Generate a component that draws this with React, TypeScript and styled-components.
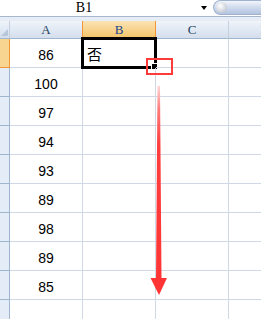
import styled, { createGlobalStyle } from "styled-components";

const GlobalStyle = createGlobalStyle`
  html, body {
    margin: 0;
    padding: 0;
    background: #fff;
    overflow: hidden;
  }
`;

const Page = styled.div`
  position: relative;
  width: 261px;
  height: 319px;
  overflow: hidden;
  background: #fff;
`;

const FormulaBar = styled.div`
  display: flex;
  align-items: center;
  height: 16px;
  border-bottom: 1px solid #a7b7cc;
  background: #fff;
`;

const NameBox = styled.div`
  width: 196px;
  display: flex;
  align-items: center;
  justify-content: center;
  padding-right: 28px;
  box-sizing: border-box;
  font-family: "Liberation Serif", serif;
  font-size: 14px;
  color: #000;
  height: 16px;
  line-height: 16px;
`;

const DropArrow = styled.div`
  width: 0;
  height: 0;
  margin-left: 5px;
  border-left: 3.5px solid transparent;
  border-right: 3.5px solid transparent;
  border-top: 4px solid #000;
`;

const ExpandButton = styled.div`
  position: relative;
  margin-left: 6px;
  flex: 1;
  height: 15px;
  align-self: flex-start;
  border-radius: 8px 0 0 8px;
  background: linear-gradient(#f1f5fb, #ccd8ec 55%, #b3c4df);
  border: 1px solid #9fb2cf;
  border-right: none;
  box-sizing: border-box;
`;

const Knob = styled.div`
  position: absolute;
  left: 2px;
  top: 1px;
  width: 11px;
  height: 11px;
  border-radius: 50%;
  background: radial-gradient(circle at 40% 35%, #ffffff, #c8cdd6 70%, #9aa3b3);
`;

const Band = styled.div`
  height: 4px;
  background: #e6edf7;
`;

const Grid = styled.div`
  display: grid;
  grid-template-columns: 10px 73px 73px 73px 73px;
  grid-template-rows: 18px;
  grid-auto-rows: 29px;
  & > div {
    box-sizing: border-box;
    border-right: 1px solid #d0d7e5;
    border-bottom: 1px solid #d0d7e5;
  }
`;

const HeaderCell = styled.div<{ $selected?: boolean }>`
  position: relative;
  display: flex;
  align-items: center;
  justify-content: center;
  font-family: "Liberation Serif", serif;
  font-size: 13px;
  color: ${(p) => (p.$selected ? "#15428b" : "#27415f")};
  background: ${(p) =>
    p.$selected
      ? "linear-gradient(#fbe3b4, #f8d593 45%, #f3c468)"
      : "linear-gradient(#f0f4fa, #e1e9f4 50%, #d5deec)"};
  &&& {
    border-right: 1px solid ${(p) => (p.$selected ? "#f29536" : "#c5d0df")};
    border-bottom: 1px solid #9eb6ce;
  }
  ${(p) => (p.$selected ? "box-shadow: -1px 0 0 #f29536;" : "")}
  white-space: nowrap;
`;

const CornerMark = styled.div`
  position: absolute;
  right: 1px;
  bottom: 2px;
  width: 0;
  height: 0;
  border-left: 7px solid transparent;
  border-bottom: 7px solid #b7c6da;
`;

const RowHead = styled.div<{ $selected?: boolean }>`
  background: ${(p) => (p.$selected ? "#f8d591" : "#e4ecf7")};
  &&& {
    border-right: 1px solid ${(p) => (p.$selected ? "#f29536" : "#9eb6ce")};
    border-bottom: 1px solid ${(p) => (p.$selected ? "#f29536" : "#9eb6ce")};
  }
`;

const NumCell = styled.div`
  display: flex;
  align-items: center;
  justify-content: center;
  padding-top: 3px;
  font-family: "Liberation Sans", Arial, sans-serif;
  font-size: 14px;
  color: #000;
`;

const TextCell = styled.div`
  position: relative;
  display: flex;
  align-items: center;
  padding-left: 4px;
  font-family: "Noto Sans CJK SC", sans-serif;
  font-size: 15px;
  color: #000;
`;

const Selection = styled.div`
  position: absolute;
  left: -2px;
  top: -2px;
  right: -2px;
  bottom: -2px;
  border: 3px solid #000;
  pointer-events: none;
`;

const FillHandle = styled.div`
  position: absolute;
  right: -4px;
  bottom: -4px;
  width: 5px;
  height: 5px;
  background: #000;
  border: 1px solid #fff;
`;

const Callout = styled.div`
  position: absolute;
  left: 146px;
  top: 58px;
  width: 27px;
  height: 17px;
  border: 2px solid #ff3a3a;
  box-sizing: border-box;
  pointer-events: none;
`;

const ArrowLayer = styled.svg`
  position: absolute;
  left: 0;
  top: 0;
  pointer-events: none;
`;

const values = ["86", "100", "97", "94", "93", "89", "98", "89", "85", ""];

export default function App() {
  return (
    <Page>
      <GlobalStyle />
      <FormulaBar>
        <NameBox>B1</NameBox>
        <DropArrow />
        <ExpandButton>
          <Knob />
        </ExpandButton>
      </FormulaBar>
      <Band />
      <Grid>
        <HeaderCell>
          <CornerMark />
        </HeaderCell>
        <HeaderCell>A</HeaderCell>
        <HeaderCell $selected>B</HeaderCell>
        <HeaderCell>C</HeaderCell>
        <HeaderCell>D</HeaderCell>
        {values.flatMap((v, i) => [
          <RowHead key={`h${i}`} $selected={i === 0} />,
          <NumCell key={`a${i}`}>{v}</NumCell>,
          i === 0 ? (
            <TextCell key={`b${i}`}>
              否
              <Selection>
                <FillHandle />
              </Selection>
            </TextCell>
          ) : (
            <TextCell key={`b${i}`} />
          ),
          <TextCell key={`c${i}`} />,
          <TextCell key={`d${i}`} />,
        ])}
      </Grid>
      <Callout />
      <ArrowLayer width="261" height="319" viewBox="0 0 261 319">
        <defs>
          <linearGradient id="shaft" x1="0" y1="86" x2="0" y2="280" gradientUnits="userSpaceOnUse">
            <stop offset="0" stopColor="#ffd6d6" />
            <stop offset="0.12" stopColor="#ff7b7b" />
            <stop offset="0.3" stopColor="#ff3d3d" />
            <stop offset="1" stopColor="#ff3535" />
          </linearGradient>
        </defs>
        <polygon points="157.5,86 160,86 161.5,279 156,279" fill="url(#shaft)" />
        <polygon points="150.5,278 167,278 159,295" fill="#ff3535" />
      </ArrowLayer>
    </Page>
  );
}
